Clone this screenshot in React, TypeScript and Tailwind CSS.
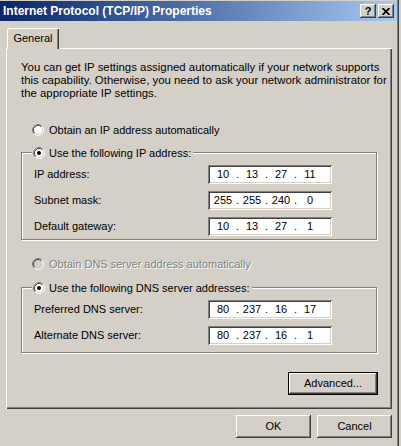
import { Fragment } from "react";

const raised =
  "shadow-[inset_-1px_-1px_0_#404040,inset_1px_1px_0_#ffffff,inset_-2px_-2px_0_#808080]";
const sunken =
  "shadow-[inset_1px_1px_0_#808080,inset_-1px_-1px_0_#ffffff,inset_2px_2px_0_#404040,inset_-2px_-2px_0_#d4d0c8]";
const etched =
  "border border-[#808080] shadow-[inset_1px_1px_0_#ffffff,1px_1px_0_#ffffff]";

function Radio({ checked, disabled }: { checked?: boolean; disabled?: boolean }) {
  return (
    <svg width="12" height="12" viewBox="0 0 12 12" className="shrink-0">
      <circle cx="6" cy="6" r="5" fill={disabled ? "#d4d0c8" : "#ffffff"} />
      <path d="M9.89 2.11A5.5 5.5 0 0 0 2.11 9.89" fill="none" stroke="#808080" />
      <path d="M2.11 9.89A5.5 5.5 0 0 0 9.89 2.11" fill="none" stroke="#ffffff" />
      <path d="M9.18 2.82A4.5 4.5 0 0 0 2.82 9.18" fill="none" stroke="#404040" />
      <path d="M2.82 9.18A4.5 4.5 0 0 0 9.18 2.82" fill="none" stroke="#d4d0c8" />
      {checked && <circle cx="6" cy="6" r="2" fill="#000000" />}
    </svg>
  );
}

function IpBox({ parts }: { parts: string[] }) {
  return (
    <div className={`w-[124px] h-[19px] bg-white flex items-center pl-[3px] ${sunken}`}>
      {parts.map((p, i) => (
        <Fragment key={i}>
          {i > 0 && <span className="w-[5px] text-center">.</span>}
          <span className="w-[24px] text-center">{p}</span>
        </Fragment>
      ))}
    </div>
  );
}

function Row({ label, parts }: { label: string; parts: string[] }) {
  return (
    <div className="flex items-center h-[19px]">
      <span className="w-[174px]">{label}</span>
      <IpBox parts={parts} />
    </div>
  );
}

function Group({
  legend,
  className,
  children,
}: {
  legend: string;
  className: string;
  children: React.ReactNode;
}) {
  return (
    <div className={`relative w-[356px] ${etched} ${className}`}>
      <div className="absolute left-[10px] top-[-8px] flex items-center gap-[4px] bg-[#d4d0c8] px-px h-[16px]">
        <Radio checked />
        <span className="pr-px">{legend}</span>
      </div>
      {children}
    </div>
  );
}

function Button({ label, def }: { label: string; def?: boolean }) {
  return (
    <div
      className={`flex items-center justify-center h-[23px] ${
        def
          ? "w-[90px] border border-black shadow-[inset_-1px_-1px_0_#404040,inset_1px_1px_0_#ffffff,inset_-2px_-2px_0_#808080]"
          : `w-[75px] ${raised}`
      }`}
    >
      {label}
    </div>
  );
}

export default function App() {
  return (
    <div className="w-[401px] h-[446px] bg-[#d4d0c8] text-[11px] leading-[13px] text-black font-['Liberation_Sans',sans-serif]">
      <div className="w-[399px] h-full pt-px flex flex-col shadow-[inset_-1px_0_0_#404040,inset_-2px_0_0_#808080]">
        <div className="h-[20px] w-[397px] flex items-center bg-linear-to-r from-[#0a246a] to-[#a6caf0] pl-[3px] pr-[3px]">
          <span className="font-bold text-white text-[12px]">Internet Protocol (TCP/IP) Properties</span>
          <div className="ml-auto flex gap-[2px]">
            <div className={`w-[16px] h-[14px] bg-[#d4d0c8] flex items-center justify-center font-bold text-[11px] ${raised}`}>
              ?
            </div>
            <div className={`w-[16px] h-[14px] bg-[#d4d0c8] flex items-center justify-center ${raised}`}>
              <svg width="8" height="7" viewBox="0 0 8 7">
                <path d="M0.5 0L7.5 7M7.5 0L0.5 7" stroke="#000" strokeWidth="1.6" />
              </svg>
            </div>
          </div>
        </div>

        <div className="mt-[7px] pl-[6px] flex flex-col">
          <div className="relative z-10 ml-px -mb-px w-[52px] h-[21px] flex items-center justify-center bg-[#d4d0c8] rounded-tl-[2px] shadow-[inset_1px_1px_0_#ffffff,inset_-1px_0_0_#404040,inset_-2px_0_0_#808080]">
            General
          </div>

          <div className="w-[386px] h-[361px] pl-[15px] pt-[13px] flex flex-col shadow-[inset_1px_1px_0_#ffffff,inset_-1px_-1px_0_#404040,inset_-2px_-2px_0_#808080]">
            <p className="whitespace-nowrap text-[11.4px]">
              You can get IP settings assigned automatically if your network supports
              <br />
              this capability. Otherwise, you need to ask your network administrator for
              <br />
              the appropriate IP settings.
            </p>

            <div className="mt-[22px] ml-[11px] h-[16px] flex items-center gap-[5px]">
              <Radio />
              <span>Obtain an IP address automatically</span>
            </div>

            <Group legend="Use the following IP address:" className="mt-[14px] h-[88px] pl-[12px] pt-[12px] flex flex-col gap-[7px]">
              <Row label="IP address:" parts={["10", "13", "27", "11"]} />
              <Row label="Subnet mask:" parts={["255", "255", "240", "0"]} />
              <Row label="Default gateway:" parts={["10", "13", "27", "1"]} />
            </Group>

            <div className="mt-[16px] ml-[11px] h-[16px] flex items-center gap-[5px] text-[#808080]">
              <Radio disabled />
              <span className="[text-shadow:1px_1px_0_#ffffff]">Obtain DNS server address automatically</span>
            </div>

            <Group legend="Use the following DNS server addresses:" className="mt-[15px] h-[66px] pl-[12px] pt-[12px] flex flex-col gap-[7px]">
              <Row label="Preferred DNS server:" parts={["80", "237", "16", "17"]} />
              <Row label="Alternate DNS server:" parts={["80", "237", "16", "1"]} />
            </Group>

            <div className="mt-[19px] w-[357px] flex justify-end">
              <Button label="Advanced..." def />
            </div>
          </div>

          <div className="mt-[6px] w-[386px] flex justify-end gap-[6px]">
            <Button label="OK" />
            <Button label="Cancel" />
          </div>
        </div>
      </div>
    </div>
  );
}
